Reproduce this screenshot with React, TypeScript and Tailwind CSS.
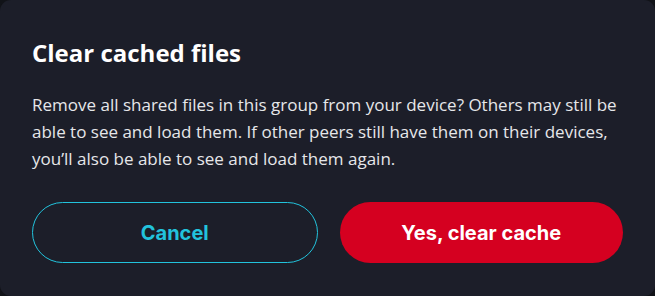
export default function App() {
  return (
    <div className="w-[655px] h-[296px] bg-[#111318]">
      <div
        className="h-full rounded-[11px] bg-[#1c1e29] px-8 pt-[37px] flex flex-col"
        style={{ fontFamily: '"Open Sans", "Noto Sans", sans-serif' }}
      >
        <h2 className="text-[24px] leading-[32px] font-bold text-white">
          Clear cached files
        </h2>
        <p className="mt-[22px] text-[17px] leading-[27px] text-[#e6e7ea]">
          Remove all shared files in this group from your device? Others may still be
          <br />
          able to see and load them. If other peers still have them on their devices,
          <br />
          you’ll also be able to see and load them again.
        </p>
        <div
          className="mt-[30px] flex gap-[22px]"
          style={{ fontFamily: 'Inter, Roboto, sans-serif' }}
        >
          <button className="flex-1 h-[61px] rounded-full border border-[#22c3dc] text-[#22c3dc] text-[20px] font-bold">
            Cancel
          </button>
          <button className="flex-1 h-[61px] rounded-full bg-[#d50020] text-white text-[20px] font-bold">
            Yes, clear cache
          </button>
        </div>
      </div>
    </div>
  )
}
